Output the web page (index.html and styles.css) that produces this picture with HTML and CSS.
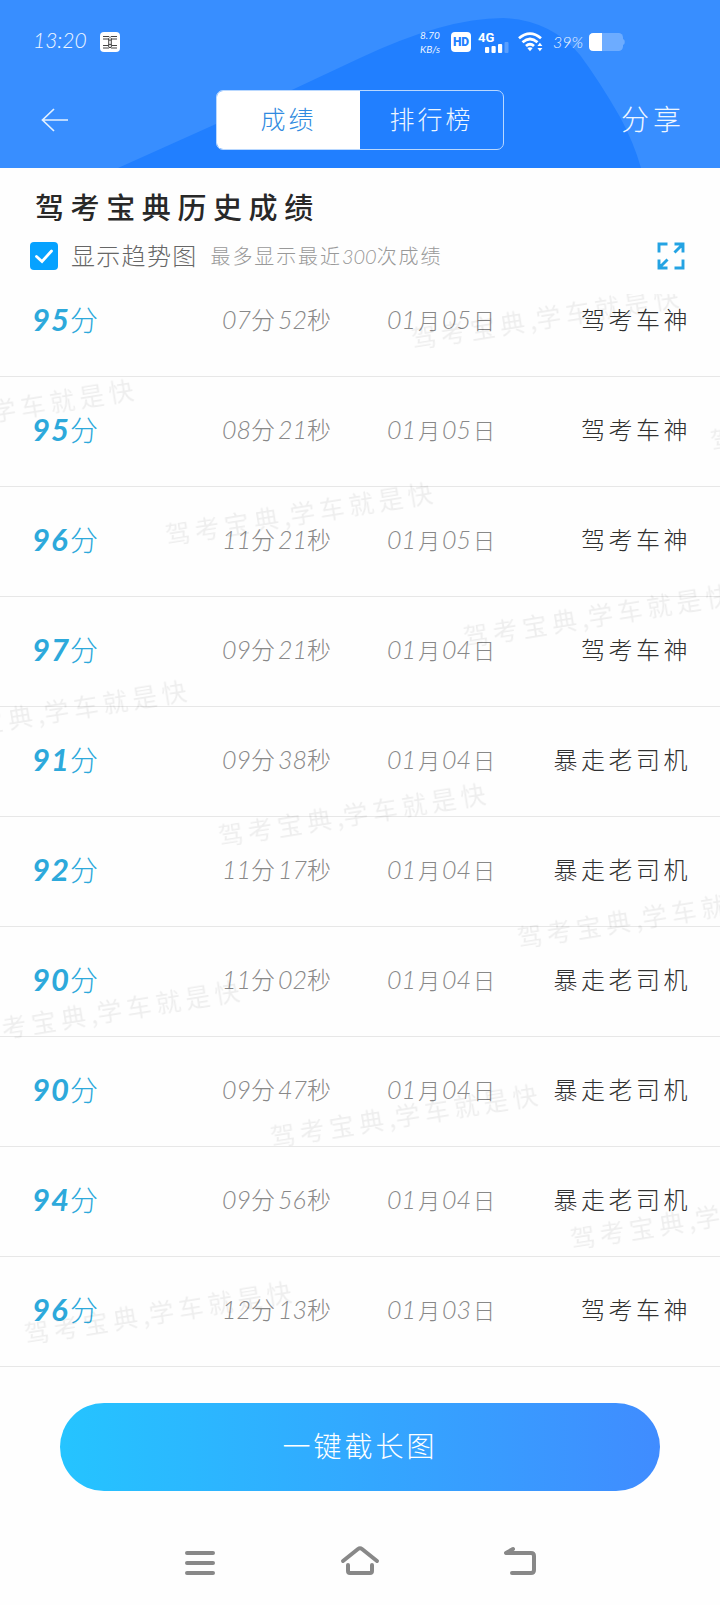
FILE: index.html
```html
<!DOCTYPE html>
<html lang="zh-CN">
<head>
<meta charset="utf-8">
<title>驾考宝典历史成绩</title>
<link rel="stylesheet" href="styles.css">
</head>
<body>
<div class="screen">
  <header class="header">
    <svg class="header-bg" viewBox="0 0 720 168" width="720" height="168"><path d="M118 168L216 124L295 88.500L360 58Q445 18 503 18Q551 20 580 55Q600 82 620 117Q634 143 641 168Z" fill="#217fff"/></svg>
    <div class="status">
      <span class="clock">13:20</span>
      <svg class="app-badge" width="20" height="20" viewBox="0 0 20 20"><rect width="20" height="20" rx="4" fill="#fff"/><path d="M3 4.500H9L10 5.500L11 4.500H17M3 7H8L10 8.500L12 7H17M3 13.500H8L10 12L12 13.500H17M3 16H9L10 15L11 16H17M8.700 6V15M11.300 6V15" fill="none" stroke="#444" stroke-width="1"/></svg>
      <span class="speed"><span>8.70</span><span>KB/s</span></span>
      <span class="hd">HD</span>
      <span class="signal"><span class="net">4G</span>
        <svg width="24" height="11" viewBox="0 0 24 11"><g fill="#fff"><rect y="5" width="4.200" height="6" rx="1"/><rect x="6.500" y="4" width="4.200" height="7" rx="1"/><rect x="13" y="2" width="4.200" height="9" rx="1"/></g><rect x="19.500" y="0" width="4" height="11" rx="1" fill="#fff" opacity=".25"/></svg>
      </span>
      <svg class="wifi" width="25" height="20" viewBox="0 0 25 20"><g fill="none" stroke="#fff" stroke-width="2.800"><path d="M1 6.300Q12 -3 23 6.300"/><path d="M4.500 10.300Q12 3.800 19.500 10.300"/><path d="M8 14Q12 10.400 16 14"/></g><path d="M9.300 16Q12 14.600 14.700 16L12 19.300Z" fill="#fff"/><path d="M19.400 14L21.900 10.800L24.400 14ZM19.400 16H24.400L21.900 19.200Z" fill="#fff"/></svg>
      <span class="percent">39%</span>
      <svg class="battery" width="37" height="18" viewBox="0 0 37 18"><rect width="34" height="18" rx="4.500" fill="#fff" opacity=".27"/><path d="M34 6Q35.800 6.500 35.800 9T34 12Z" fill="#fff" opacity=".27"/><path d="M4.500 0H13V18H4.500Q0 18 0 13.500V4.500Q0 0 4.500 0Z" fill="#fff"/></svg>
    </div>
    <nav class="toolbar">
      <svg class="back" width="28" height="24" viewBox="0 0 28 24"><path d="M13 1L1.500 12L13 23M1.500 12H27" fill="none" stroke="#e3f1ff" stroke-width="1.700"/></svg>
      <div class="tabs"><span class="tab active">成绩</span><span class="tab">排行榜</span></div>
      <span class="share">分享</span>
    </nav>
  </header>

  <section class="intro">
    <h1 class="title">驾考宝典历史成绩</h1>
    <div class="options">
      <svg class="checkbox" width="28" height="28" viewBox="0 0 28 28"><rect width="28" height="28" rx="4" fill="#06a2ff"/><path d="M6.500 14.500L12 19.500L21.500 9" fill="none" stroke="#fff" stroke-width="2.800" stroke-linecap="round"/></svg>
      <span class="label">显示趋势图</span>
      <span class="hint">最多显示最近<i>300</i>次成绩</span>
      <svg class="expand" width="28" height="28" viewBox="0 0 28 28"><path d="M2 10.500V2H10.500M17.500 2H26V10.500M17.500 10.500L26 2M2 17.500V26H10.500M2 26L10.500 17.500M26 17.500V26H17.500" fill="none" stroke="#24a3e3" stroke-width="2.900"/></svg>
    </div>
  </section>

  <main class="list">
    <div class="row"><div class="score"><b>95</b>分</div><div class="time"><i>07</i><span>分</span><i>52</i><span>秒</span></div><div class="date"><i>01</i><span>月</span><i>05</i><span>日</span></div><div class="rank">驾考车神</div></div>
    <div class="row"><div class="score"><b>95</b>分</div><div class="time"><i>08</i><span>分</span><i>21</i><span>秒</span></div><div class="date"><i>01</i><span>月</span><i>05</i><span>日</span></div><div class="rank">驾考车神</div></div>
    <div class="row"><div class="score"><b>96</b>分</div><div class="time"><i>11</i><span>分</span><i>21</i><span>秒</span></div><div class="date"><i>01</i><span>月</span><i>05</i><span>日</span></div><div class="rank">驾考车神</div></div>
    <div class="row"><div class="score"><b>97</b>分</div><div class="time"><i>09</i><span>分</span><i>21</i><span>秒</span></div><div class="date"><i>01</i><span>月</span><i>04</i><span>日</span></div><div class="rank">驾考车神</div></div>
    <div class="row"><div class="score"><b>91</b>分</div><div class="time"><i>09</i><span>分</span><i>38</i><span>秒</span></div><div class="date"><i>01</i><span>月</span><i>04</i><span>日</span></div><div class="rank">暴走老司机</div></div>
    <div class="row"><div class="score"><b>92</b>分</div><div class="time"><i>11</i><span>分</span><i>17</i><span>秒</span></div><div class="date"><i>01</i><span>月</span><i>04</i><span>日</span></div><div class="rank">暴走老司机</div></div>
    <div class="row"><div class="score"><b>90</b>分</div><div class="time"><i>11</i><span>分</span><i>02</i><span>秒</span></div><div class="date"><i>01</i><span>月</span><i>04</i><span>日</span></div><div class="rank">暴走老司机</div></div>
    <div class="row"><div class="score"><b>90</b>分</div><div class="time"><i>09</i><span>分</span><i>47</i><span>秒</span></div><div class="date"><i>01</i><span>月</span><i>04</i><span>日</span></div><div class="rank">暴走老司机</div></div>
    <div class="row"><div class="score"><b>94</b>分</div><div class="time"><i>09</i><span>分</span><i>56</i><span>秒</span></div><div class="date"><i>01</i><span>月</span><i>04</i><span>日</span></div><div class="rank">暴走老司机</div></div>
    <div class="row"><div class="score"><b>96</b>分</div><div class="time"><i>12</i><span>分</span><i>13</i><span>秒</span></div><div class="date"><i>01</i><span>月</span><i>03</i><span>日</span></div><div class="rank">驾考车神</div></div>
    <svg class="watermarks" width="720" height="1073" viewBox="0 294 720 1073">
      <g class="mark">
        <text transform="translate(413 349) rotate(-9.200)">驾考宝典<tspan class="comma">,</tspan>学车就是快</text>
        <text transform="translate(712 451) rotate(-9.200)">驾考宝典<tspan class="comma">,</tspan>学车就是快</text>
        <text transform="translate(-132 442) rotate(-9.200)">驾考宝典<tspan class="comma">,</tspan>学车就是快</text>
        <text transform="translate(167 545) rotate(-9.200)">驾考宝典<tspan class="comma">,</tspan>学车就是快</text>
        <text transform="translate(465 647) rotate(-9.200)">驾考宝典<tspan class="comma">,</tspan>学车就是快</text>
        <text transform="translate(-79 743) rotate(-9.200)">驾考宝典<tspan class="comma">,</tspan>学车就是快</text>
        <text transform="translate(220 846) rotate(-9.200)">驾考宝典<tspan class="comma">,</tspan>学车就是快</text>
        <text transform="translate(519 948) rotate(-9.200)">驾考宝典<tspan class="comma">,</tspan>学车就是快</text>
        <text transform="translate(-26 1043) rotate(-9.200)">驾考宝典<tspan class="comma">,</tspan>学车就是快</text>
        <text transform="translate(272 1147) rotate(-9.200)">驾考宝典<tspan class="comma">,</tspan>学车就是快</text>
        <text transform="translate(572 1249) rotate(-9.200)">驾考宝典<tspan class="comma">,</tspan>学车就是快</text>
        <text transform="translate(26 1344) rotate(-9.200)">驾考宝典<tspan class="comma">,</tspan>学车就是快</text>
      </g>
    </svg>
  </main>

  <div class="action"><button class="capture">一键截长图</button></div>

  <footer class="sysnav">
    <svg width="40" height="30" viewBox="0 0 40 30"><path d="M7 8H33M7 18H33M7 28H33"/></svg>
    <svg width="40" height="30" viewBox="0 0 40 30"><path d="M3 16L18 4Q20 2.500 22 4L37 16M8 20V26Q8 28 10 28H30Q32 28 32 26V20"/></svg>
    <svg width="40" height="30" viewBox="0 0 40 30"><path d="M13 4L6 8H31Q34 8 34 11V25Q34 28 31 28H12"/></svg>
  </footer>
</div>
</body>
</html>
```
FILE: styles.css
```css
* { box-sizing: border-box; }
body {
  margin: 0;
  background: #fefefe;
  font-family: "Noto Sans CJK SC", sans-serif;
  font-weight: 300;
}
svg { display: block; overflow: visible; }
i, b { font-family: Lato, "Noto Sans CJK SC", sans-serif; font-style: italic; }
.screen {
  width: 720px;
  height: 1605px;
  display: flex;
  flex-direction: column;
  overflow: hidden;
}

.header {
  position: relative;
  height: 168px;
  flex: none;
  background: #388eff;
  color: #eef6ff;
}
.header-bg { position: absolute; inset: 0; }
.status {
  position: relative;
  display: flex;
  align-items: center;
  height: 84px;
  padding-left: 33px;
  font-family: Lato, sans-serif;
  font-style: italic;
}
.clock { width: 67px; font-size: 21px; line-height: 22px; margin-top: -4px; }
.speed {
  display: flex;
  flex-direction: column;
  width: 31px;
  margin-left: 300px;
  font-size: 10px;
  line-height: 14px;
  font-weight: 400;
}
.hd {
  width: 20px;
  height: 20px;
  border-radius: 4px;
  background: #fff;
  color: #217fff;
  font: 900 12px/20px Roboto, sans-serif;
  text-align: center;
}
.signal {
  display: flex;
  flex-direction: column;
  width: 32px;
  margin-left: 7px;
  font: 700 12px/11px Roboto, sans-serif;
}
.signal svg { margin-left: 7px; margin-top: -2px; }
.net { color: #fff; font-size: 13px; line-height: 12px; }
.wifi { margin-left: 8px; }
.percent { width: 36px; margin-left: 10px; font-size: 16px; line-height: 20px; white-space: nowrap; }
.toolbar {
  position: relative;
  display: flex;
  align-items: center;
  height: 72px;
  padding: 0 37px 0 41px;
}
.tabs {
  display: flex;
  width: 288px;
  height: 60px;
  margin-left: 147px;
  border: 1.500px solid #b9d8ff;
  border-radius: 7px;
  overflow: hidden;
}
.tab {
  flex: 1;
  display: flex;
  align-items: center;
  justify-content: center;
  font-size: 25px;
  letter-spacing: 3px;
  padding-bottom: 4px;
}
.tab.active { background: #fff; color: #308ae0; }
.share { margin-left: auto; font-size: 28px; letter-spacing: 4px; white-space: nowrap; line-height: 40px; margin-bottom: 5px; margin-right: -2px; }

.intro { height: 126px; flex: none; padding: 16px 35px 0 30px; }
.title {
  margin: 0 0 0 5px;
  font-size: 29px;
  line-height: 44px;
  letter-spacing: 6.600px;
  font-weight: 500;
  color: #282828;
}
.options { display: flex; align-items: center; height: 56px; }
.label { margin-left: 13px; margin-bottom: 3px; font-size: 24px; letter-spacing: 1.300px; color: #666; }
.hint { margin-left: 13px; margin-bottom: 2px; font-size: 20px; letter-spacing: 1.900px; color: #999; }
.hint i { letter-spacing: 0; }
.expand { margin-left: auto; }

.list {
  position: relative;
  height: 1073px;
  flex: none;
  display: flex;
  flex-direction: column;
  justify-content: flex-end;
  overflow: hidden;
}
.row {
  display: grid;
  grid-template-columns: 190px 165px 1fr auto;
  align-items: center;
  flex: none;
  height: 110px;
  padding: 0 29px 5px 32px;
  border-bottom: 1px solid #e7e7e7;
}
.row > div { display: flex; align-items: center; height: 40px; line-height: 40px; }
.score { font-size: 28px; color: #2da9db; }
.score b { width: 38px; font-size: 31px; font-weight: 700; letter-spacing: 1px; }
.time, .date { font-size: 24px; color: #888; }
.time i { width: 29px; font-size: 25px; }
.time span { width: 27px; }
.date { font-size: 22px; }
.date i { width: 31px; font-size: 25px; }
.date span { width: 24px; }
.rank { font-size: 24px; letter-spacing: 3.500px; color: #303030; }

.watermarks { position: absolute; left: 0; top: 0; pointer-events: none; overflow: hidden; }
.mark { font-size: 25px; font-weight: 400; letter-spacing: 4.800px; fill: #000; opacity: .065; }
.comma { letter-spacing: 0; }

.action { padding: 36px 60px 0; height: 168px; flex: none; }
.capture {
  width: 600px;
  height: 88px;
  padding: 0 0 4px;
  border: 0;
  border-radius: 44px;
  background: linear-gradient(90deg, #25c4ff, #408cff);
  color: #fff;
  font: 300 28px/40px "Noto Sans CJK SC", sans-serif;
  letter-spacing: 3px;
}
.sysnav { display: flex; justify-content: center; gap: 120px; padding-top: 10px; }
.sysnav path { fill: none; stroke: #888; stroke-width: 4; stroke-linecap: round; stroke-linejoin: round; }
```
